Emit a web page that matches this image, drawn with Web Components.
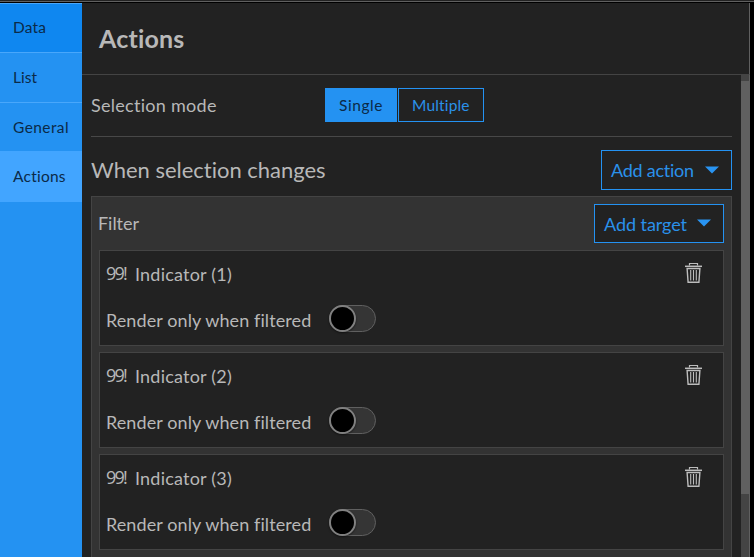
<!DOCTYPE html>
<html lang="en"><head><meta charset="utf-8"><title>Actions</title>
<style>body{margin:0;background:#000;font-family:Lato,"Open Sans",sans-serif;color:#b8b8b8;overflow:hidden}</style></head>
<body><settings-app></settings-app>
<script>
const define=(name,html,init)=>customElements.define(name,class extends HTMLElement{
  constructor(){super();this.attachShadow({mode:'open'}).innerHTML=html;}
  connectedCallback(){if(init)init.call(this,this.shadowRoot);}
});

/* Single-line label whose tracking is adjusted to fill the width in "w". */
define('fit-text','<style>:host{display:block;white-space:nowrap;line-height:24px}span{display:inline-block}</style><span><slot></slot></span>',function(r){
  const s=r.querySelector('span'),w=+this.getAttribute('w'),n=this.textContent.length;
  this.style.width=w+'px';
  s.style.letterSpacing=((w-s.getBoundingClientRect().width)/n)+'px';
});

define('nav-item',`<style>:host{display:flex;align-items:center;box-sizing:border-box;height:50px;padding:0 0 2px 13px;border-bottom:1px solid #49a7fb;color:#0b2a48;font-size:15.5px}
:host([first]){background:#0f87f0;border-top:1px solid #49a7fb}:host([plain]){border-bottom:0;height:48px;padding-bottom:0}:host([active]){background:#42a5ff;height:51px;border:0}</style><slot></slot>`);

define('icon-trash',`<style>:host{display:block;width:17px;height:20px}svg{display:block}</style>
<svg width="17" height="20" viewBox="0 0 17 20" fill="none" stroke="#bdbdbd"><path d="M4.5 2.5V.5h8v2" stroke-width="1.2"/><path d="M0 3.3h17" stroke-width="1.5"/><path d="M2.1 5.5h12.8l-1 13.7H3.1z" stroke-width="1.4"/><path d="M5.7 7v10.5M8.5 7v10.5M11.3 7v10.5" stroke-width="1.1"/></svg>`);

define('drop-button',`<style>:host{display:flex;align-items:center;justify-content:space-between;box-sizing:border-box;border:1px solid #2492f2;background:#222;color:#2a91ea;padding:0 12px 0 9px;font-size:18px}
svg{display:block;margin-bottom:1px}</style><slot></slot><svg width="14" height="8"><path d="M0 .5h14L7 7.5z" fill="#2994f2"/></svg>`);

define('toggle-switch',`<style>:host{display:block;box-sizing:border-box;width:47px;height:27px;border:1px solid #606060;border-radius:14px;background:#353535}
i{display:block;box-sizing:border-box;width:27px;height:27px;margin:-1px;border:2px solid #808080;border-radius:50%;background:#000;box-shadow:0 1px 2px #0008}</style><i></i>`);

define('mode-picker',`<style>:host{display:flex;gap:1px;font-size:15.5px;margin-bottom:2px}div{box-sizing:border-box;height:34px;display:flex;align-items:center;justify-content:center;border:1px solid #2492f2;color:#2a91ea}
.s{width:72px;background:#2492f2;color:#0b2a48}.m{width:86px}</style>
<div class="s"><fit-text w="44">Single</fit-text></div><div class="m"><fit-text w="58">Multiple</fit-text></div>`);

define('target-card',`<style>:host{display:block;box-sizing:border-box;height:96px;border:1px solid #444;background:#222;font-size:18px}
.a{display:flex;height:46px;align-items:center;padding:0 21px 0 6px}
.q{margin:0 9px 2px 0;font:18px "Liberation Sans Narrow","Open Sans",sans-serif}
icon-trash{margin-left:auto;margin-bottom:3px}.b{display:flex;height:45px;align-items:center;padding-left:6px;gap:18px}.b fit-text{margin-top:1px}toggle-switch{margin-bottom:3px}</style>
<div class="a"><fit-text class="q" w="20">99!</fit-text><slot></slot><icon-trash></icon-trash></div>
<div class="b"><fit-text w="205">Render only when filtered</fit-text><toggle-switch></toggle-switch></div>`);

define('action-panel',`<style>:host{display:block;box-sizing:border-box;height:370px;background:#333;border:1px solid #444;padding:7px}
header{display:flex;justify-content:space-between;height:39px;align-items:center;margin-bottom:7px;font-size:18px}header>fit-text{margin:0 0 1px -1px}drop-button{width:130px;height:39px}
section{display:grid;gap:6px}</style>
<header><fit-text w="41">Filter</fit-text><drop-button><fit-text w="83">Add target</fit-text></drop-button></header>
<section><target-card><fit-text w="97">Indicator (1)</fit-text></target-card><target-card><fit-text w="97">Indicator (2)</fit-text></target-card><target-card><fit-text w="97">Indicator (3)</fit-text></target-card></section>`);

define('settings-app',`<style>
:host{display:grid;box-sizing:border-box;width:754px;height:557px;padding-top:3px;grid-template-columns:82px 668px;grid-template-rows:554px;overflow:hidden;background:linear-gradient(#222 0 1px,#606060 1px 2px,#000 2px)}
nav{background:#2492f2}
main{background:#222;display:grid;grid-template-rows:72px 482px;min-width:0}
.head{box-sizing:border-box;border-bottom:1px solid #444;border-right:1px solid #606060;display:flex;align-items:center;padding:0 0 2px 17px;font-size:25px;font-weight:700}
.body{display:grid;grid-template-columns:659px 9px;overflow:hidden}
.content{padding:0 9px;overflow:hidden}
.mode{box-sizing:border-box;display:grid;grid-template-columns:234px 1fr;align-items:center;height:62px;border-bottom:1px solid #484848;font-size:18px}.mode fit-text{margin-bottom:2px}
.event{display:flex;justify-content:space-between;align-items:flex-start;padding-top:13px;height:46px;font-size:22px}.event>fit-text{margin-top:8px}
drop-button{width:131px;height:40px}
.bar{box-sizing:border-box;background:#444;border-right:1px solid #606060;padding-top:6px}.thumb{height:413px;width:9px;background:#606060}
</style>
<nav><nav-item first><fit-text w="33">Data</fit-text></nav-item><nav-item><fit-text w="24">List</fit-text></nav-item><nav-item plain><fit-text w="56">General</fit-text></nav-item><nav-item active><fit-text w="53">Actions</fit-text></nav-item></nav>
<main><div class="head"><fit-text w="86">Actions</fit-text></div>
<div class="body"><div class="content">
<div class="mode"><fit-text w="126">Selection mode</fit-text><mode-picker></mode-picker></div>
<div class="event"><fit-text w="235">When selection changes</fit-text><drop-button><fit-text w="83">Add action</fit-text></drop-button></div>
<action-panel></action-panel></div><div class="bar"><div class="thumb"></div></div></div></main>`);
</script></body></html>
